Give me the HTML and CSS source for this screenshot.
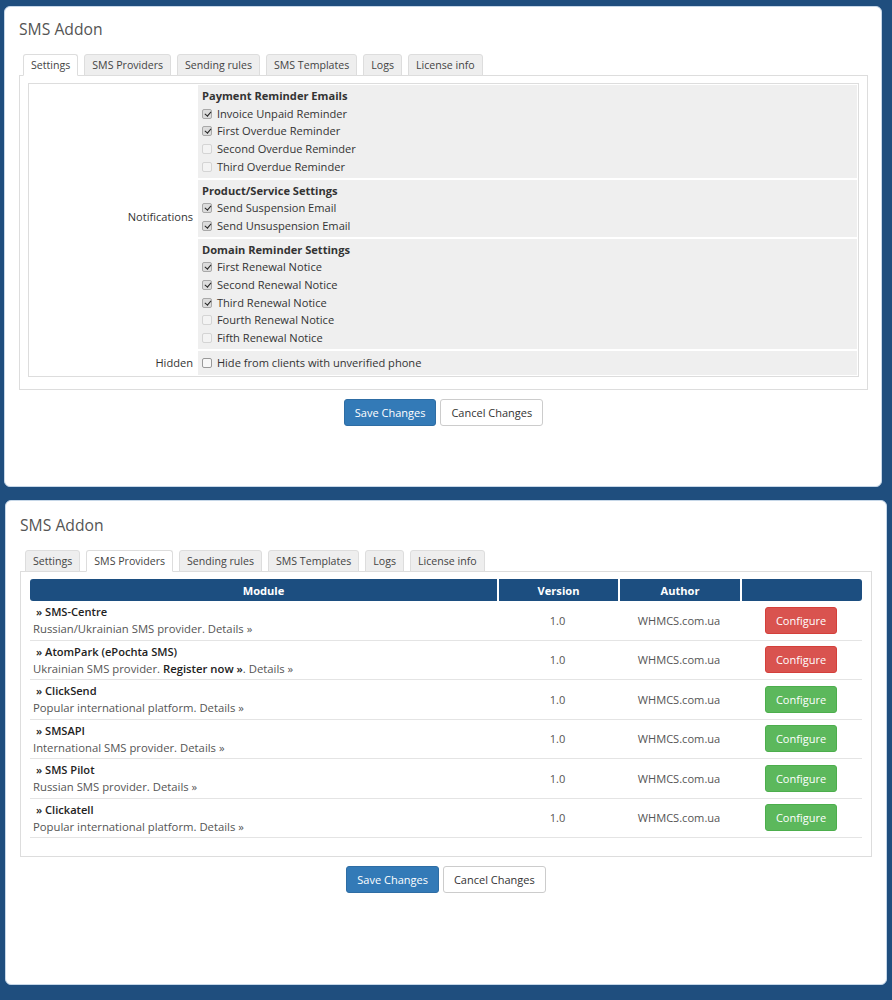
FILE: index.html
```html
<!DOCTYPE html>
<html lang="en">
<head>
  <meta charset="UTF-8">
  <title>SMS Addon</title>
  <link rel="stylesheet" href="styles.css">
</head>
<body>
  <div class="shot shot-settings">
    <h2 class="addon-title">SMS Addon</h2>
    <ul class="tabs">
      <li class="tab active">Settings</li>
      <li class="tab">SMS Providers</li>
      <li class="tab">Sending rules</li>
      <li class="tab">SMS Templates</li>
      <li class="tab">Logs</li>
      <li class="tab">License info</li>
    </ul>
    <div class="tab-box">
      <div class="form-grid">
        <div class="label label-notify">Notifications</div>
        <div class="field">
          <div class="group-title">Payment Reminder Emails</div>
          <label class="check"><input type="checkbox" checked> Invoice Unpaid Reminder</label>
          <label class="check"><input type="checkbox" checked> First Overdue Reminder</label>
          <label class="check"><input type="checkbox" class="faint"> Second Overdue Reminder</label>
          <label class="check"><input type="checkbox" class="faint"> Third Overdue Reminder</label>
        </div>
        <div class="field">
          <div class="group-title">Product/Service Settings</div>
          <label class="check"><input type="checkbox" checked> Send Suspension Email</label>
          <label class="check"><input type="checkbox" checked> Send Unsuspension Email</label>
        </div>
        <div class="field">
          <div class="group-title">Domain Reminder Settings</div>
          <label class="check"><input type="checkbox" checked> First Renewal Notice</label>
          <label class="check"><input type="checkbox" checked> Second Renewal Notice</label>
          <label class="check"><input type="checkbox" checked> Third Renewal Notice</label>
          <label class="check"><input type="checkbox" class="faint"> Fourth Renewal Notice</label>
          <label class="check"><input type="checkbox" class="faint"> Fifth Renewal Notice</label>
        </div>
        <div class="label">Hidden</div>
        <div class="field field-single">
          <label class="check"><input type="checkbox"> Hide from clients with unverified phone</label>
        </div>
      </div>
    </div>
    <div class="actions">
      <button class="btn btn-primary">Save Changes</button>
      <button class="btn btn-default">Cancel Changes</button>
    </div>
  </div>

  <div class="shot shot-providers">
    <h2 class="addon-title">SMS Addon</h2>
    <ul class="tabs">
      <li class="tab">Settings</li>
      <li class="tab active">SMS Providers</li>
      <li class="tab">Sending rules</li>
      <li class="tab">SMS Templates</li>
      <li class="tab">Logs</li>
      <li class="tab">License info</li>
    </ul>
    <div class="tab-box tab-box-table">
      <table class="modules">
        <colgroup>
          <col class="col-module">
          <col class="col-version">
          <col class="col-author">
          <col class="col-action">
        </colgroup>
        <thead>
          <tr><th>Module</th><th>Version</th><th>Author</th><th></th></tr>
        </thead>
        <tbody>
          <tr>
            <td>
              <div class="mod-name">» SMS-Centre</div>
              <div class="mod-desc">Russian/Ukrainian SMS provider. <a>Details »</a></div>
            </td>
            <td class="center">1.0</td>
            <td class="center">WHMCS.com.ua</td>
            <td class="center"><button class="btn btn-danger">Configure</button></td>
          </tr>
          <tr>
            <td>
              <div class="mod-name">» AtomPark (ePochta SMS)</div>
              <div class="mod-desc">Ukrainian SMS provider. <b>Register now »</b>. <a>Details »</a></div>
            </td>
            <td class="center">1.0</td>
            <td class="center">WHMCS.com.ua</td>
            <td class="center"><button class="btn btn-danger">Configure</button></td>
          </tr>
          <tr>
            <td>
              <div class="mod-name">» ClickSend</div>
              <div class="mod-desc">Popular international platform. <a>Details »</a></div>
            </td>
            <td class="center">1.0</td>
            <td class="center">WHMCS.com.ua</td>
            <td class="center"><button class="btn btn-success">Configure</button></td>
          </tr>
          <tr>
            <td>
              <div class="mod-name">» SMSAPI</div>
              <div class="mod-desc">International SMS provider. <a>Details »</a></div>
            </td>
            <td class="center">1.0</td>
            <td class="center">WHMCS.com.ua</td>
            <td class="center"><button class="btn btn-success">Configure</button></td>
          </tr>
          <tr>
            <td>
              <div class="mod-name">» SMS Pilot</div>
              <div class="mod-desc">Russian SMS provider. <a>Details »</a></div>
            </td>
            <td class="center">1.0</td>
            <td class="center">WHMCS.com.ua</td>
            <td class="center"><button class="btn btn-success">Configure</button></td>
          </tr>
          <tr>
            <td>
              <div class="mod-name">» Clickatell</div>
              <div class="mod-desc">Popular international platform. <a>Details »</a></div>
            </td>
            <td class="center">1.0</td>
            <td class="center">WHMCS.com.ua</td>
            <td class="center"><button class="btn btn-success">Configure</button></td>
          </tr>
        </tbody>
      </table>
    </div>
    <div class="actions">
      <button class="btn btn-primary">Save Changes</button>
      <button class="btn btn-default">Cancel Changes</button>
    </div>
  </div>
</body>
</html>
```

FILE: styles.css
```css
body {
  margin: 0;
  padding: 6px 0 20px;
  background-color: #1f4e7e;
  font-family: "Open Sans", "Noto Sans", Arial, sans-serif;
  font-size: 11.1px;
  color: #333;
}

.shot {
  box-sizing: border-box;
  background-color: #fff;
  border: 1px solid #c6d7e8;
  border-radius: 6px;
  padding: 10px 13px 0 14px;
}

.shot-settings {
  width: 878px;
  height: 481px;
  margin-left: 4px;
}

.shot-providers {
  width: 882px;
  height: 485px;
  margin: 13px 0 0 5px;
  padding: 12px 14px 0 14px;
}

.addon-title {
  margin: 0 0 13px;
  font-size: 15.7px;
  line-height: 24px;
  font-weight: normal;
  color: #555;
}

/* tabs */
.tabs {
  display: flex;
  gap: 6px;
  list-style: none;
  margin: 0 0 -1px;
  padding: 0 0 0 4px;
  position: relative;
  z-index: 1;
}

.shot-providers .tabs {
  padding-left: 5px;
}

.tab {
  font-size: 10.6px;
  line-height: 20px;
  padding: 0 7px;
  background-color: #eee;
  border: 1px solid #ddd;
  border-radius: 3px 3px 0 0;
  color: #444;
}

.tab.active {
  background-color: #fff;
  border-bottom-color: #fff;
}

.tab-box {
  border: 1px solid #ddd;
  padding: 7px 8px 12px 8px;
}

.tab-box-table {
  padding: 7px 9px 18px 9px;
}

/* settings form */
.form-grid {
  display: grid;
  grid-template-columns: 168px 1fr;
  row-gap: 2px;
  border: 1px solid #ddd;
  padding: 1px;
}

.label {
  text-align: right;
  padding-right: 5px;
  align-self: center;
  line-height: 17.7px;
}

.label-notify {
  grid-row: span 3;
}

.field {
  background-color: #efefef;
  padding: 2px 4px 2px 4px;
  line-height: 17.7px;
}

.field-single {
  padding: 3px 4px;
}

.group-title {
  font-weight: bold;
}

.check {
  display: block;
}

.check input {
  appearance: none;
  -webkit-appearance: none;
  position: relative;
  box-sizing: border-box;
  width: 10px;
  height: 10px;
  margin: 0 2px 0 0;
  vertical-align: -1px;
  border: 1px solid #999;
  border-radius: 2px;
  background-color: #f7f7f7;
}

.check input.faint {
  border-color: #d4d4d4;
  background-color: #f3f3f3;
}

.check input:checked {
  border-color: #a8a8a8;
  background-color: #dcdcdc;
}

.check input:checked::after {
  content: "";
  position: absolute;
  left: 2.5px;
  top: 0;
  width: 2.5px;
  height: 5px;
  border: solid #222;
  border-width: 0 1.6px 1.6px 0;
  transform: rotate(40deg);
}

/* buttons */
.actions {
  display: flex;
  justify-content: center;
  gap: 4px;
  margin-top: 9px;
}

.btn {
  font-family: inherit;
  font-size: 11px;
  height: 27px;
  padding: 0 10px;
  border: 1px solid #ccc;
  border-radius: 3px;
  cursor: pointer;
}

.btn-primary {
  background-color: #337ab7;
  border-color: #2e6da4;
  color: #fff;
}

.btn-default {
  background-color: #fff;
  color: #333;
}

.btn-danger {
  background-color: #d9534f;
  border-color: #d43f3a;
  color: #fff;
}

.btn-success {
  background-color: #5cb85c;
  border-color: #4cae4c;
  color: #fff;
}

/* modules table */
.modules {
  width: 832px;
  table-layout: fixed;
  border-collapse: separate;
  border-spacing: 0;
}

.col-module { width: 467px; }
.col-version { width: 121px; }
.col-author { width: 122px; }
.col-action { width: 122px; }

.modules th {
  background-color: #1c4e80;
  color: #fff;
  font-weight: bold;
  height: 22px;
  padding: 0;
  border-left: 2px solid #fff;
}

.modules th:first-child {
  border-left: none;
  border-radius: 3px 0 0 3px;
}

.modules th:last-child {
  border-radius: 0 3px 3px 0;
}

.modules td {
  padding: 2px 3px 2.5px 3px;
  line-height: 17px;
  border-bottom: 1px solid #e4e4e4;
  color: #555;
}

.modules td.center {
  text-align: center;
  vertical-align: middle;
}

.mod-name {
  padding-left: 3px;
  font-weight: 600;
  color: #222;
}

.mod-desc {
  font-size: 11.3px;
}

.mod-desc b {
  color: #222;
  font-weight: 600;
}
```
